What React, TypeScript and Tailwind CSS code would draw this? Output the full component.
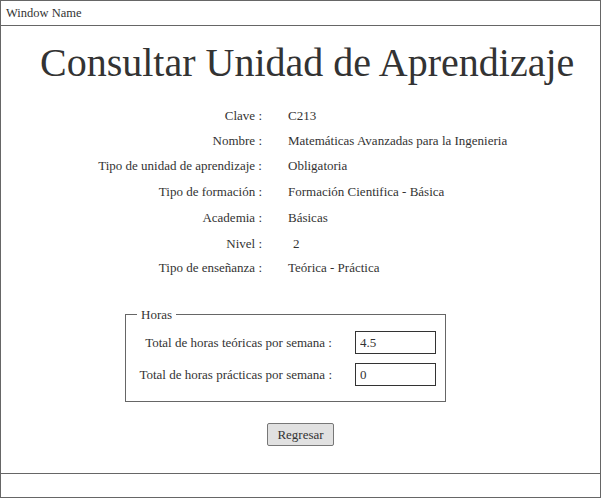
const rows: { label: string; value: string; h: string; shift: string }[] = [
  { label: "Clave :", value: "C213", h: "h-[25px]", shift: "" },
  { label: "Nombre :", value: "Matemáticas Avanzadas para la Ingenieria", h: "h-[25px]", shift: "" },
  { label: "Tipo de unidad de aprendizaje :", value: "Obligatoria", h: "h-[26px]", shift: "" },
  { label: "Tipo de formación :", value: "Formación Cientifica - Básica", h: "h-[26px]", shift: "" },
  { label: "Academia :", value: "Básicas", h: "h-[26px]", shift: "" },
  { label: "Nivel :", value: "2", h: "h-[25px]", shift: "pl-[5px]" },
  { label: "Tipo de enseñanza :", value: "Teórica - Práctica", h: "h-[23px]", shift: "-ml-[1px]" },
];

export default function App() {
  return (
    <div className="w-[601px] h-[498px] border border-[#666] flex flex-col bg-white text-[#333] font-['Liberation_Serif','Times_New_Roman',serif]">
      {/* barra de titulo */}
      <div className="h-[25px] border-b border-[#666] flex items-center pl-[5px] text-[12.5px]">
        Window Name
      </div>

      <div className="flex-1 flex flex-col">
        <h1 className="pt-[14px] pl-[39px] text-[40px] leading-[46px]">
          Consultar Unidad de Aprendizaje
        </h1>

        <div className="mt-[17px] flex flex-col text-[13px]">
          {rows.map((r) => (
            <div key={r.label} className={`flex items-center ${r.h}`}>
              <div className="w-[261px] text-right">{r.label}</div>
              <div className={`ml-[26px] ${r.shift}`}>{r.value}</div>
            </div>
          ))}
        </div>

        <fieldset className="mt-[28px] ml-[124px] w-[321px] border border-[#666] px-0 pb-[15px] text-[13px]">
          <legend className="ml-[11px] px-[4px] leading-[15px]">Horas</legend>
          <div className="mt-[9px] flex flex-col gap-[9px]">
            <div className="flex items-center">
              <div className="w-[206px] text-right">Total de horas teóricas por semana :</div>
              <input
                readOnly
                value="4.5"
                className="ml-[23px] w-[81px] h-[23px] border border-[#333] px-[4px] text-[13px] text-[#333] outline-none"
              />
            </div>
            <div className="flex items-center">
              <div className="w-[206px] text-right">Total de horas prácticas por semana :</div>
              <input
                readOnly
                value="0"
                className="ml-[23px] w-[81px] h-[23px] border border-[#333] px-[4px] text-[13px] text-[#333] outline-none"
              />
            </div>
          </div>
        </fieldset>

        <div className="mt-[21px] flex justify-center">
          <button className="w-[67px] h-[23px] bg-[#e1e1e1] border border-[#777] rounded-[2px] text-[13px] text-[#333]">
            Regresar
          </button>
        </div>
      </div>

      <div className="h-[24px] border-t border-[#666]" />
    </div>
  );
}
